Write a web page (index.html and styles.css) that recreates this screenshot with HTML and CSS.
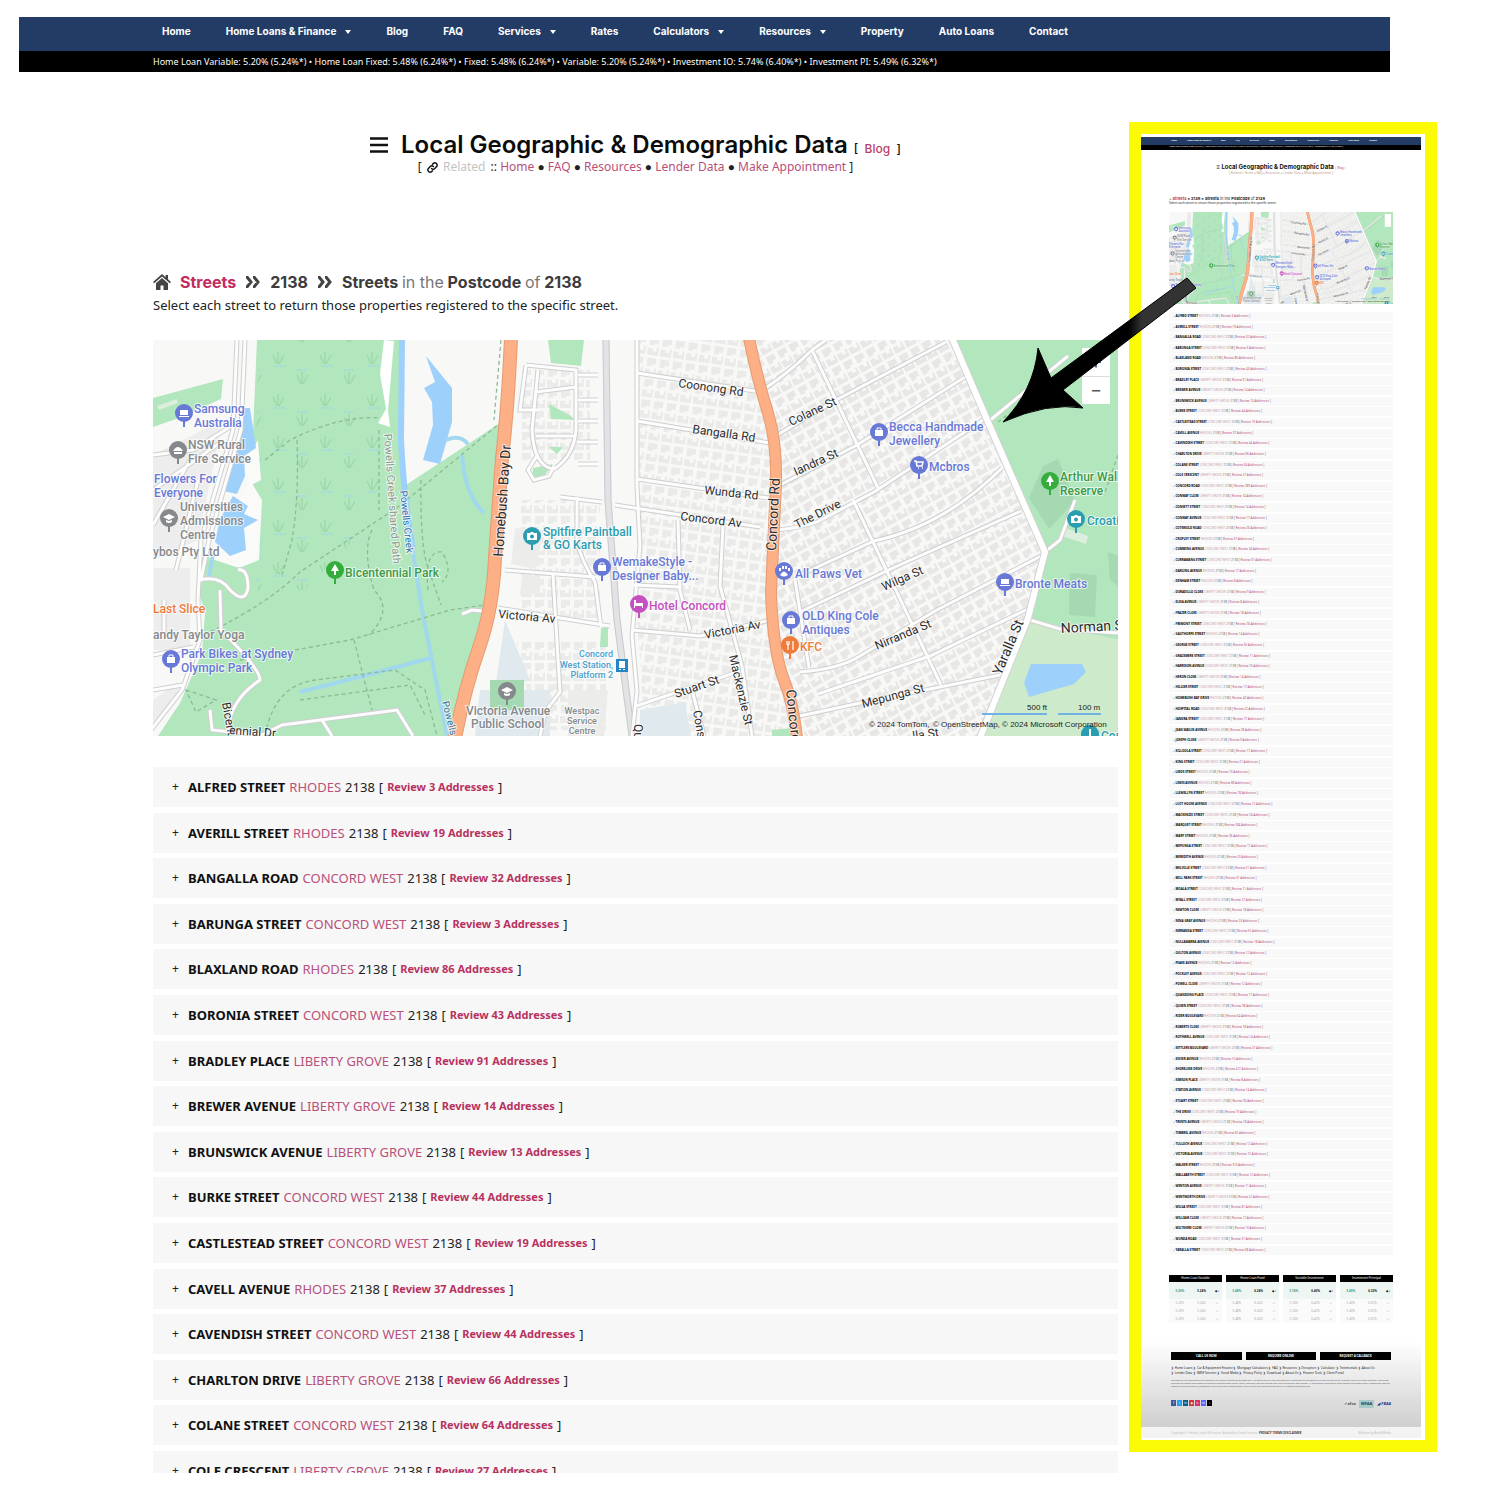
FILE: index.html
```html
<!DOCTYPE html>
<html lang="en">
<head>
<meta charset="utf-8">
<meta name="viewport" content="width=device-width, initial-scale=1">
<title>Local Geographic &amp; Demographic Data</title>
<link rel="stylesheet" href="styles.css">
</head>
<body>
<header class="site-header">
  <nav class="menu" aria-label="Main">
    <a href="#">Home</a>
    <button type="button">Home Loans &amp; Finance<span class="caret"></span></button>
    <a href="#">Blog</a>
    <a href="#">FAQ</a>
    <button type="button">Services<span class="caret"></span></button>
    <a href="#">Rates</a>
    <button type="button">Calculators<span class="caret"></span></button>
    <button type="button">Resources<span class="caret"></span></button>
    <a href="#">Property</a>
    <a href="#">Auto Loans</a>
    <a href="#">Contact</a>
  </nav>
  <p class="ticker">Home Loan Variable: 5.20% (5.24%*) • Home Loan Fixed: 5.48% (6.24%*) • Fixed: 5.48% (6.24%*) • Variable: 5.20% (5.24%*) • Investment IO: 5.74% (6.40%*) • Investment PI: 5.49% (6.32%*)</p>
</header>

<div class="layout">
  <main class="content">
    <div class="title-block">
      <h1><svg class="bars" viewBox="0 0 18 16" aria-hidden="true"><path d="M0 1.500h18M0 8h18M0 14.500h18" stroke="#111" stroke-width="2.600"/></svg>Local Geographic &amp; Demographic Data <small>[ &nbsp;<a href="#">Blog</a>&nbsp; ]</small></h1>
      <p class="related">[ <svg class="chain" viewBox="0 0 24 24" aria-hidden="true"><g fill="none" stroke="#111" stroke-width="3.200" stroke-linecap="round"><path d="M10 14a5 5 0 0 0 7 0l4-4a5 5 0 0 0-7-7l-2 2"/><path d="M14 10a5 5 0 0 0-7 0l-4 4a5 5 0 0 0 7 7l2-2"/></g></svg> <span class="faint">Related</span> :: <a href="#">Home</a> ● <a href="#">FAQ</a> ● <a href="#">Resources</a> ● <a href="#">Lender Data</a> ● <a href="#">Make Appointment</a> ]</p>
    </div>

    <h2 class="crumbs">
      <svg class="house" viewBox="0 0 18 16" aria-hidden="true"><path fill="#444" d="M9 0 0 8l1.200 1.300L9 2.500l7.800 6.800L18 8l-3-2.700V1h-2.400v2.200zM9 4 3 9.200V16h4.500v-4.500h3V16H15V9.200z"/></svg>
      <a href="#">Streets</a>
      <svg class="chevrons" viewBox="0 0 16 12" aria-hidden="true"><path fill="none" stroke="#444" stroke-width="3" d="M1 1h1l4 5-4 5H1M8 1h1l4 5-4 5H8"/></svg>
      <span>2138</span>
      <svg class="chevrons" viewBox="0 0 16 12" aria-hidden="true"><path fill="none" stroke="#444" stroke-width="3" d="M1 1h1l4 5-4 5H1M8 1h1l4 5-4 5H8"/></svg>
      <span>Streets <i>in the</i> Postcode <i>of</i> 2138</span>
    </h2>
    <p class="intro">Select each street to return those properties registered to the specific street.</p>

    <div class="map">
      <svg class="map-art" id="map" viewBox="153 340 965 396" preserveAspectRatio="xMidYMid slice" role="img" aria-label="Map of postcode 2138">
        <defs>
          <g id="pin"><path d="M-1 6h2v8h-2z"/><circle r="9"/></g>
          <g id="bag" fill="#fff"><path d="M-4-2h8v6h-8z"/><path d="M-2-2v-2h4v2" fill="none" stroke="#fff"/></g>
          <g id="laptop"><path d="M-4-3h8v5h-8zM-5 3h10v1H-5z" fill="#fff"/></g>
          <g id="tree"><path d="M0-6-4 1h3v4h2V1h3z" fill="#fff"/></g>
          <g id="cap"><path d="M-6-1 0-4l6 3-6 3zM-3 2v2q3 2 6 0V2L0 3z" fill="#fff"/></g>
          <g id="camera"><path d="M-5-3h3l1-1h2l1 1h3v7H-5z" fill="#fff"/><circle r="2" cy="0.500" fill="#2a9db0"/></g>
          <pattern id="reeds" width="47" height="42" patternUnits="userSpaceOnUse" x="268" y="346">
            <path d="M9 18 5 9M10 18V6M11 18l5-9M33 38l-4-9M34 38V26M35 38l5-9" stroke="#9fd9aa" stroke-width="1.500" fill="none"/>
            <path d="M6 20h12M29 24h10" stroke="#a0d6e8" stroke-width="1.200"/>
          </pattern>
          <pattern id="lots" width="13" height="21" patternUnits="userSpaceOnUse">
            <path d="M1 2h5v3h4V1h2v8H1zM2 12h9v6H7v2H2z" fill="#ebebea"/>
          </pattern>
          <pattern id="lots-tilt" width="13" height="21" patternUnits="userSpaceOnUse" patternTransform="rotate(-29)">
            <path d="M1 2h5v3h4V1h2v8H1zM2 12h9v6H7v2H2z" fill="#e8e7e5"/>
          </pattern>
          <pattern id="lots-east" width="13" height="21" patternUnits="userSpaceOnUse" patternTransform="rotate(8)">
            <path d="M1 2h5v3h4V1h2v8H1zM2 12h9v6H7v2H2z" fill="#eaeae8"/>
          </pattern>
          <g id="roads">
            <path d="M637 340v146l3 60-8 90 5 55-5 45M637 373l124 19M637 421l133 22M637 479l138 20M560 497l42 5M615 505l145 22M505 570l90 7M498 608l112 18M632 630l68 6 71-16M577 497v45q5 20 18 40l6 45M553 575l7 117-15 20-5 24M678 520l2 70 10 40M723 526l-3 60 22 80 10 70M636 706l104-35M692 690l12 46M634 585l46 2"/>
            <path d="M526 365l50 5v60q-2 26-22 39-20-2-22-39l6-60M526 365l-6 45 17 0M536 392l40-5M536 436h40M578 375h20M578 400h20M578 421h20M578 442h20M578 464h20M554 466l-5 10-15 4-6-10 10-16"/>
            <path d="M760 392q30-20 52-42l14-10M772 438l66-39 108-57M780 485l77-40 108-68M777 530q22-2 40-8l57-30 112-74M800 575l74-34q70-15 128-73M800 612l95-45 126-56M800 672q40-3 60-16l75-45 108-56M818 694l112-38 100-48M795 717l70-15 140-28M812 350l66 138M853 500l88 185M795 580l14 88"/>
            <path d="M237 340l-4 90-32 110-3 60 2 40-18 50-31 40M245 340l-4 90-32 110-8 40M153 455l40-5 40-25M153 490l68-48M153 525l40-70M176 570l22-90M164 600v34M200 580q20-5 30 10 15 15 18-2 0-20-10-18M220 590l1 40q40 40 39 50-30 20-32 50M153 655l40-8M153 690l30-5M210 710l2 20 50 5 20-10 115-15 16 26M322 720l10 16"/>
            <path d="M988 422l80-66M1045 552l15-12 15-40M462 614l10-4 20 2M1030 620l30 9 58 4"/>
          </g>
        </defs>

        <path fill="#f8f8f7" d="M153 340h965v396H153z"/>
        <!-- blocks of houses -->
        <path fill="url(#lots-east)" d="M620 340h130l24 90v100l-4 90 12 60 8 56H645l-8-120V340z"/>
        <path fill="url(#lots-tilt)" d="M756 340h197l92 212-18 65-45 119H803l-27-90v-180z"/>
        <path fill="url(#lots)" d="M522 370h68v90h-68zM520 500h80v120h-80zM516 640h90v90h-70z"/>
        <path fill="#eeeded" d="M153 455l70-35-25 120-45 20zM154 568h36v82h-36zM153 700l25-18v15l-25 25z"/>
        <path fill="#e0eaee" d="M505 620l25 60-35 10zM480 690h70v46h-75zM640 710l45-8 6 34h-51z"/>
        <path fill="#ececeb" d="M515 528l28 3-7 38-25-5zM568 690h40l-4 46h-36zM522 576h18v18h-20z"/>

        <!-- parks -->
        <path fill="#b2e6bd" d="M257 340h147l-1 147 97-64-2 60-6 90-8 40-16 60-15 63H158l22-33 22-50 3-40-6-20 10-40 44-18-1-80z"/>
        <path fill="url(#reeds)" d="M259 340h125v130l-20 60-60 60h-48V440z"/>
        <path fill="#b2e6bd" d="M153 398l70-19-2 20-45 20-23 8zM548 340h36l-3 26-30-3zM549 404l22 12 4 4-24-1zM549 447h14l-6 7zM533 468l20-4-12 16-9-1zM601 628h7v19h-8zM772 730l20-2v8h-20z"/>
        <path fill="#b2e6bd" d="M953 340h165v300l-88-20 15-68-57-137z"/>
        <path fill="#cdebca" d="M1028 618l90 22v96H979z"/>
        <path fill="#a5d9b2" d="M1043 466l15-7 17 42-26 28-20-31zM1070 573l27 2-2 42-26-2zM1108 552l10 4v30l-8-6zM490 680h34v30h-34z"/>
        <path fill="#dceedd" d="M1066 528l22 8-2 8-24-8zM157 406l20-7 1 4-19 7z"/>

        <!-- water -->
        <path fill="#fafbf8" d="M250 480l12 20-3 60-20 8-30-10zM258 440l3 40-12 6-6-20z"/>
        <path fill="#9dd0fb" d="M426 356l13 16 13 16v34l-12 42-17-4 10-35-1-23-8-14 11-6zM241 408h9l6 40-12 8 1 20-8 18-14-3 15-44zM233 496l15 10-4 8 14 6-14 8 2 22-16 6-15-14 5-23zM1031 664h51l4 8-12 12-45 13-5-14z"/>
        <path fill="none" stroke="#9dd0fb" stroke-width="6" d="M402 340l-1 100q3 60 12 110"/>
        <path fill="none" stroke="#a2d8ee" stroke-width="4" d="M411 540l11 70 25 126M300 692q80-20 130-34M462 455q3 40 22 58M213 554l-4 24M446 440q14-6 22 4"/>
        <path fill="#fff" d="M384 340l10 1-6 70 2 16-12-4 8-14-6-35z"/>

        <!-- footpaths -->
        <g fill="none" stroke="#8cba94" stroke-width="1.300" stroke-dasharray="4 3">
          <path d="M210 632q60-30 90-60l98-65 102-84M297 440q2 60-5 100l-10 35M265 460l25-20q50-25 90-22M379 430v80M421 480q-1 60 6 85l14 40M372 530q-10 20 2 60 20 20-5 45M240 660l110-20 100-30 35-5M354 640l18 70M265 735q10-50 50-55l80-10 30 20 12 46M300 700l110-15 15 30M186 690l30 10-20 12zM1100 342l-48 40-54 40M428 590q-4-40 14-38 12 20 0 30M501 340l-7 80M498 440l-8 110M1118 455l-14 40"/>
        </g>
        <!-- railway -->
        <path fill="none" stroke="#e2e3e5" stroke-width="7" d="M606 340l2 160 9 120 15 116"/>
        <path fill="none" stroke="#c9cbcf" d="M609 340l2 160 9 120 15 116M603 340l2 160 9 120 15 116"/>

        <!-- streets: casing, then the carriageway -->
        <use href="#roads" fill="none" stroke="#cfcfd1" stroke-width="5"/>
        <use href="#roads" fill="none" stroke="#fdfdfd" stroke-width="3"/>
        <path fill="none" stroke="#d2d2d2" stroke-width="8" d="M952 338l36 84 57 130-17 66-48 120"/>
        <path fill="none" stroke="#fff" stroke-width="6" d="M952 338l36 84 57 130-17 66-48 120"/>

        <!-- main roads -->
        <g fill="none">
          <path stroke="#e59a72" stroke-width="14" d="M511 338q-3 70-9 120l-7 100q-2 50-16 90-14 40-24 90"/>
          <path stroke="#fdaf86" stroke-width="12" d="M511 338q-3 70-9 120l-7 100q-2 50-16 90-14 40-24 90"/>
          <path stroke="#e59a72" stroke-width="12" d="M749 338q8 40 19 75 9 30 8 70l-5 110q2 60 14 90 8 20 12 55"/>
          <path stroke="#fdaf86" stroke-width="10" d="M749 338q8 40 19 75 9 30 8 70l-5 110q2 60 14 90 8 20 12 55"/>
        </g>

        <!-- street names -->
        <g class="road-name">
          <text transform="translate(678 387) rotate(8)">Coonong Rd</text>
          <text transform="translate(692 433) rotate(8)">Bangalla Rd</text>
          <text transform="translate(704 494) rotate(6)">Wunda Rd</text>
          <text transform="translate(680 520) rotate(7)">Concord Av</text>
          <text transform="translate(498 618) rotate(5)">Victoria Av</text>
          <text transform="translate(705 639) rotate(-11)">Victoria Av</text>
          <text transform="translate(676 698) rotate(-19)">Stuart St</text>
          <text transform="translate(729 656) rotate(77)">Mackenzie St</text>
          <text transform="translate(693 711) rotate(80)">Conso</text>
          <text transform="translate(634 724) rotate(90)">Queen</text>
          <text transform="translate(791 426) rotate(-25)">Colane St</text>
          <text transform="translate(796 476) rotate(-25)">Iandra St</text>
          <text transform="translate(797 529) rotate(-27)">The Drive</text>
          <text transform="translate(884 591) rotate(-24)">Wilga St</text>
          <text transform="translate(877 650) rotate(-23)">Nirranda St</text>
          <text transform="translate(863 708) rotate(-15)">Mepunga St</text>
          <text transform="translate(913 740) rotate(-8)">lla St</text>
          <text transform="translate(222 703) rotate(80)">Bicent</text>
          <text transform="translate(229 734) rotate(4)">ennial Dr</text>
        </g>
        <g class="road-name large">
          <text transform="translate(503 557) rotate(-86)">Homebush Bay Dr</text>
          <text transform="translate(776 551) rotate(-87)">Concord Rd</text>
          <text transform="translate(786 690) rotate(84)">Concord</text>
          <text transform="translate(1001 676) rotate(-67)">Yaralla St</text>
          <text transform="translate(1061 633) rotate(-3)">Norman St</text>
        </g>
        <text class="water-name" transform="translate(400 491) rotate(84)">Powells Creek</text>
        <text class="water-name" transform="translate(442 702) rotate(76)">Powells C</text>
        <text class="path-name" transform="translate(384 434) rotate(86)">Powells Creek shared Path</text>

        <!-- places -->
        <g class="place" fill="#6878d6">
          <use href="#pin" x="184" y="413"/><use href="#laptop" x="184" y="413"/>
          <text x="194" y="413">Samsung</text><text x="194" y="427">Australia</text>
          <text x="154" y="483">Flowers For</text><text x="154" y="497">Everyone</text>
          <use href="#pin" x="171" y="659"/><use href="#bag" x="171" y="659"/>
          <text x="181" y="658">Park Bikes at Sydney</text><text x="181" y="672">Olympic Park</text>
          <use href="#pin" x="602" y="567"/><use href="#bag" x="602" y="567"/>
          <text x="612" y="566">WemakeStyle -</text><text x="612" y="580">Designer Baby...</text>
          <use href="#pin" x="879" y="432"/><use href="#bag" x="879" y="432"/>
          <text x="889" y="431">Becca Handmade</text><text x="889" y="445">Jewellery</text>
          <use href="#pin" x="919" y="465"/><path d="M914 461h2l1 5h5l1-4h-6M918 468h1M922 468h1" stroke="#fff" stroke-width="1.500" fill="none"/>
          <text x="929" y="471">Mcbros</text>
          <use href="#pin" x="784" y="571"/><path fill="#fff" d="M780 575q4-7 8 0-4 3-8 0zM779 568h2v3h-2zM782 566h2v3h-2zM785 566h2v3h-2zM788 568h2v3h-2z"/>
          <text x="795" y="578">All Paws Vet</text>
          <use href="#pin" x="791" y="620"/><use href="#bag" x="791" y="620"/>
          <text x="802" y="620">OLD King Cole</text><text x="802" y="634">Antiques</text>
          <use href="#pin" x="1005" y="582"/><use href="#laptop" x="1005" y="582"/>
          <text x="1015" y="588">Bronte Meats</text>
        </g>
        <g class="place" fill="#85898c">
          <use href="#pin" x="178" y="450"/><path fill="#fff" d="M173 451q5-8 10 0zM174 452h8v2h-8z"/>
          <text x="188" y="449">NSW Rural</text><text x="188" y="463">Fire Service</text>
          <use href="#pin" x="169" y="518"/><use href="#cap" x="169" y="518"/>
          <text x="180" y="511">Universities</text><text x="180" y="525">Admissions</text><text x="180" y="539">Centre</text>
          <text x="153" y="556">ybos Pty Ltd</text>
          <text x="153" y="639">andy Taylor Yoga</text>
          <use href="#pin" x="507" y="691"/><use href="#cap" x="507" y="691"/>
          <text x="466" y="715">Victoria Avenue</text><text x="471" y="728">Public School</text>
        </g>
        <g class="place note" fill="#85898c" text-anchor="middle">
          <text x="582" y="714">Westpac</text><text x="582" y="724">Service</text><text x="582" y="734">Centre</text>
        </g>
        <g class="place note" fill="#4b9fd0" text-anchor="end">
          <text x="613" y="657">Concord</text><text x="613" y="668">West Station,</text><text x="613" y="678">Platform 2</text>
        </g>
        <path fill="#2484c6" d="M616 659h12v13h-12z"/><path fill="#fff" d="M619 661h6v7h-6zM619 669h2v1h-2zM623 669h2v1h-2z"/>
        <g class="place" fill="#3b9a47">
          <use href="#pin" x="335" y="570" fill="#35ad3b"/><use href="#tree" x="335" y="570"/><text x="345" y="577">Bicentennial Park</text>
          <use href="#pin" x="1050" y="481" fill="#35ad3b"/><use href="#tree" x="1050" y="481"/><text x="1060" y="481">Arthur Walker</text><text x="1060" y="495">Reserve</text>
        </g>
        <g class="place" fill="#2a9db0">
          <use href="#pin" x="532" y="536"/><use href="#camera" x="532" y="536"/><text x="543" y="536">Spitfire Paintball</text><text x="543" y="549">&amp; GO Karts</text>
          <use href="#pin" x="1076" y="519"/><use href="#camera" x="1076" y="519"/><text x="1087" y="525">Croatian</text>
          <use href="#pin" x="1090" y="734"/><path fill="#fff" d="M1089 729h2v7h-2z"/><text x="1101" y="740">Con</text>
        </g>
        <g class="place" fill="#c550bf"><use href="#pin" x="639" y="604"/><path fill="#fff" d="M634 600h2v3h7v5h-1v-2h-7v2h-1z"/><text x="649" y="610">Hotel Concord</text></g>
        <g class="place" fill="#ee7b3a"><use href="#pin" x="790" y="645"/><path d="M787 641v3q2 2 2 0v-3M788 644v6M793 641v9" stroke="#fff" fill="none" stroke-width="1.200"/><text x="800" y="651">KFC</text><text x="153" y="613">Last Slice</text></g>

        <!-- scale and credits -->
        <path stroke="#72b1e4" stroke-width="2" d="M982 714h65M1058 714h43"/>
        <g class="credit"><text x="1027" y="710">500 ft</text><text x="1078" y="710">100 m</text><text x="869" y="727">© 2024 TomTom,</text><text x="933" y="727">© OpenStreetMap, © 2024 Microsoft Corporation</text></g>
      </svg>
      <div class="zoom">
        <button type="button" aria-label="Zoom in">+</button>
        <button type="button" aria-label="Zoom out">−</button>
      </div>
    </div>

    <div class="street-window"><ul class="streets" id="street-list"></ul></div>
  </main>

  <aside class="preview" aria-label="Full page preview">
    <div class="mini">
      <div class="mini-nav"><span>Home</span><span>Home Loans &amp; Finance ▾</span><span>Blog</span><span>FAQ</span><span>Services ▾</span><span>Rates</span><span>Calculators ▾</span><span>Resources ▾</span><span>Property</span><span>Auto Loans</span><span>Contact</span></div>
      <p class="mini-ticker">Home Loan Variable: 5.20% (5.24%*) • Home Loan Fixed: 5.48% (6.24%*) • Fixed: 5.48% (6.24%*) • Variable: 5.20% (5.24%*) • Investment IO: 5.74% (6.40%*) • Investment PI: 5.49% (6.32%*)</p>
      <div class="mini-title">
        <h3>≡ Local Geographic &amp; Demographic Data <small>[ Blog ]</small></h3>
        <p>[ Related :: Home ● FAQ ● Resources ● Lender Data ● Make Appointment ]</p>
      </div>
      <div class="mini-body">
        <h4>⌂ <a href="#">Streets</a> » 2138 » Streets <i>in the</i> Postcode <i>of</i> 2138</h4>
        <p class="mini-intro">Select each street to return those properties registered to the specific street.</p>
        <svg class="mini-map" viewBox="153 340 965 396" preserveAspectRatio="xMidYMid slice" aria-hidden="true"><use href="#map" x="153" y="340" width="965" height="396"/><path fill="#fff" d="M1082 348h27v56h-27z"/></svg>
        <ul class="mini-streets" id="mini-list"></ul>
        <div class="rates" id="rates"></div>
      </div>
      <div class="mini-footer">
        <div class="mini-actions"><button type="button">CALL US NOW</button><button type="button">ENQUIRE ONLINE</button><button type="button">REQUEST A CALLBACK</button></div>
        <p class="mini-links">❯ Home Loans ❯ Car &amp; Equipment Finance ❯ Mortgage Calculators ❯ FAQ ❯ Resources ❯ Disruptors ❯ Calculator ❯ Testimonials ❯ About Us<br>❯ Lender Data ❯ SMSF Services ❯ Social Media ❯ Privacy Policy ❯ Download ❯ About Us ❯ Finance Tools ❯ Client Portal</p>
        <p class="mini-legal">The material and information on this website is for general information purposes only. You should not rely upon the material or information on the website as a basis for making any business, legal or any other decisions. The finance products and interest rates shown are subject to change without notice. Terms, conditions, fees and charges apply and are available upon request. All applications are subject to credit approval and lender criteria. Comparison rates are based on a secured loan of $150,000 over a term of 25 years. Different terms, fees or other loan amounts might result in a different comparison rate.</p>
        <div class="mini-brands">
          <span class="social"><i class="fb">f</i><i class="tw">t</i><i class="li">in</i><i class="yt">▶</i><i class="ig">o</i><i class="ma">m</i><i class="tk">♪</i></span>
          <span class="badges"><b>✓afca</b><b class="boxed">MFAA</b><b class="fbaa">◢ FBAA</b></span>
        </div>
      </div>
      <div class="mini-base"><span>Copyright © Home Loans &amp; Finance. Australian Credit Licence. <b>PRIVACY TERMS DISCLAIMER</b></span><span>Website by BeliefMedia</span></div>
    </div>
    <svg class="arrow" viewBox="0 0 196 148" aria-hidden="true">
      <defs><linearGradient id="shaft"><stop offset="0.650"/><stop offset="0.720" stop-color="#333"/><stop offset="1" stop-color="#333"/></linearGradient></defs>
      <path fill="url(#shaft)" stroke="#000" stroke-width="1" d="M3 147Q34 115 38 73L51 103 187 3l9 10L63 115l20 18Q48 127 3 147z"/>
    </svg>
  </aside>
</div>
<script src="streets.js"></script>
</body>
</html>
```
FILE: styles.css
```css
* { box-sizing: border-box; }

body {
  margin: 0;
  padding: 17px 63px 0 19px;
  background: #fff;
  color: #222;
  font: 14px/20px "Noto Sans", "Open Sans", sans-serif;
}

h1, h2, h3, h4, p, ul { margin: 0; padding: 0; }
ul { list-style: none; }
a { color: #b8406a; text-decoration: none; }
button { border: 0; padding: 0; font: inherit; color: inherit; background: none; }

/* header */
.site-header { margin-right: 47px; color: #fff; background: #000; }
.menu {
  display: flex;
  gap: 35px;
  height: 34px;
  padding: 4px 0 0 143px;
  background: #233c66;
  font: 700 10px/20px Inter, "Open Sans", sans-serif;
  white-space: nowrap;
}
.menu a { color: #fff; }
.menu a, .menu button { height: 20px; }
.caret {
  display: inline-block;
  margin: 0 0 1px 9px;
  border: 3px solid transparent;
  border-top: 4px solid #fff;
  border-bottom: 0;
}
.ticker {
  padding-left: 134px;
  font-size: 9px;
  line-height: 21px;
  white-space: nowrap;
}

/* two columns */
.layout {
  display: grid;
  grid-template-columns: minmax(0, 1fr) 308px;
  gap: 11px;
  align-items: start;
  padding-left: 134px;
}
.content { padding-top: 58px; }

.title-block { text-align: center; white-space: nowrap; }
h1 { height: 29px; font: 600 24px/30px Inter, sans-serif; color: #0c0c0c; }
h1 small { font-size: 12px; font-weight: 500; }
.bars { width: 18px; height: 16px; margin-right: 13px; }
.related { height: 16px; font-size: 12px; line-height: 16px; }
.related a { color: #b8507a; }
.chain { width: 11px; height: 11px; margin: 0 2px; vertical-align: middle; }
.faint { margin-right: 2px; color: #c4c4c4; }

.crumbs {
  display: flex;
  align-items: center;
  gap: 9px;
  margin-top: 95px;
  font: 700 16px/24px Inter, sans-serif;
  color: #3c3c3c;
}
.crumbs a { color: #c22c5e; }
.crumbs i { font-style: normal; font-weight: 400; color: #777; }
.house { width: 18px; height: 16px; }
.chevrons { width: 16px; height: 12px; }
.intro { font-size: 13px; line-height: 22px; }

/* map */
.map { position: relative; margin-top: 24px; }
.map-art { display: block; width: 100%; height: 396px; }
.zoom {
  position: absolute;
  top: 8px;
  right: 8px;
  display: grid;
  width: 28px;
}
.zoom button { height: 28px; background: #fff; font: 20px/28px Roboto, sans-serif; color: #555; }
.zoom button + button { border-top: 1px solid #ddd; }

.place text, .road-name text, .water-name, .path-name { paint-order: stroke; stroke: #fff; stroke-opacity: 0.700; stroke-width: 2px; }
.place { font: 500 12px Roboto, sans-serif; }
.note { font-size: 9px; }
.road-name { font: 12px Roboto, sans-serif; fill: #2c2c2c; }
.large { font-size: 14px; }
.water-name { font: 10px Roboto, sans-serif; fill: #2e6fa8; }
.path-name { font: 11px Roboto, sans-serif; fill: #8c9a90; }
.credit { font: 8px "Liberation Sans", sans-serif; fill: #222; }

/* street rows */
.street-window { height: 706px; margin-top: 31px; overflow: hidden; }
.streets { display: grid; align-content: space-between; height: 724px; }
.streets li {
  display: flex;
  align-items: center;
  gap: 4px;
  height: 40px;
  padding-left: 19px;
  background: #f7f7f7;
  white-space: nowrap;
  font-size: 13px;
}
.streets strong { font-size: 13px; color: #111; }
.streets .plus { width: 12px; font-size: 12px; }
.streets .suburb { color: #b8507a; }
.streets .review { font-size: 11px; font-weight: 700; color: #b8325f; }

/* full page preview */
.preview {
  position: relative;
  margin-top: 50px;
  padding: 3px 4px 2px 0;
  border: 12px solid #fbfb05;
}
.mini { font: 3px/4px "Noto Sans", sans-serif; white-space: nowrap; }
.mini-nav {
  display: flex;
  gap: 10px;
  height: 8px;
  padding: 2px 0 0 30px;
  background: #233c66;
  color: #fff;
  font-weight: 700;
}
.mini-nav span { font-size: 2px; }
.mini-ticker { height: 5px; padding-left: 28px; background: #000; color: #fff; font-size: 2px; }
.mini-title { padding-top: 14px; text-align: center; }
.mini-title h3 { font: 700 6px/6px Inter, sans-serif; color: #111; }
.mini-title small { font-size: 3px; font-weight: 400; color: #b8507a; }
.mini-title p { color: #b98; }
.mini-body { padding: 21px 28px 0; }
.mini-body h4 { font: 700 4px/5px Inter, sans-serif; }
.mini-body h4 i { font-style: normal; font-weight: 400; }
.mini-intro { margin-bottom: 7px; }
.mini-map { display: block; width: 100%; height: 92px; }
.mini-streets { display: grid; align-content: space-between; height: 943px; margin-top: 8px; }
.mini-streets li { height: 9px; padding-left: 4px; line-height: 9px; background: #f9f9f9; color: #777; }
.mini-streets strong { color: #000; }
.mini-streets a { color: #b8507a; }
.mini-streets .suburb { color: #c9a5b0; }

.rates { display: grid; grid-template-columns: repeat(4, 1fr); gap: 4px; margin-top: 20px; }
.rates table { width: 100%; border-collapse: collapse; background: #fafafa; color: #aaa; text-align: center; }
.rates caption { height: 7px; background: #000; color: #fff; line-height: 7px; }
.rates td { height: 8px; padding: 0; }
.rates tr:first-child td { height: 17px; background: #eef6f3; color: #111; font-weight: 700; }
.rates tr:first-child td:first-child { color: #3a9c83; }

.mini-footer { margin-top: 18px; padding: 11px 30px 19px; background: linear-gradient(#fff, #cfcfcf); }
.mini-actions { display: grid; grid-template-columns: repeat(3, 1fr); gap: 4px; }
.mini-actions button { height: 8px; background: #000; color: #fff; font-weight: 700; font-size: 3px; }
.mini-links { margin-top: 6px; line-height: 5px; font-size: 3px; color: #222; }
.mini-legal { height: 12px; margin-top: 3px; white-space: normal; font-size: 2px; line-height: 3px; color: #555; }
.mini-brands { display: flex; justify-content: space-between; margin-top: 9px; }
.social { display: flex; gap: 1px; }
.social i { width: 5px; height: 6px; color: #fff; font-style: normal; text-align: center; line-height: 6px; }
.fb { background: #3b5998; }
.tw { background: #1da1f2; }
.li { background: #0a5f8a; }
.yt { background: #cd3a35; }
.ig { background: #d6336c; }
.ma { background: #6364ff; }
.tk { background: #000; }
.badges { display: flex; gap: 3px; line-height: 8px; font-size: 4px; color: #555; }
.boxed { padding: 0 2px; background: #a9ccc8; color: #245; }
.fbaa { color: #1f2f86; font-style: italic; }
.mini-base { display: flex; justify-content: space-between; padding: 4px 30px 3px; background: #f3f3f3; color: #bbb; }
.mini-base b { color: #444; }

.arrow { position: absolute; top: 141px; left: -141px; width: 196px; height: 148px; }
```
FILE: streets.js
```js
// Each entry: street | suburb code | number of addresses
const SUBURBS = { R: "RHODES", C: "CONCORD WEST", L: "LIBERTY GROVE" };
const STREETS = `ALFRED STREET|R|3
AVERILL STREET|R|19
BANGALLA ROAD|C|32
BARUNGA STREET|C|3
BLAXLAND ROAD|R|86
BORONIA STREET|C|43
BRADLEY PLACE|L|91
BREWER AVENUE|L|14
BRUNSWICK AVENUE|L|13
BURKE STREET|C|44
CASTLESTEAD STREET|C|19
CAVELL AVENUE|R|37
CAVENDISH STREET|C|44
CHARLTON DRIVE|L|66
COLANE STREET|C|64
COLE CRESCENT|L|27
CONCORD ROAD|C|289
CONWAY CLOSE|L|14
CONSETT STREET|C|14
CONWAY AVENUE|C|17
COTSWOLD ROAD|C|26
CROPLEY STREET|R|37
CUMMING AVENUE|C|34
CURRAWANG STREET|C|31
DARLING AVENUE|R|17
DENHAM STREET|R|8
DORADILLO CLOSE|L|9
ELISA AVENUE|L|8
FRAZER CLOSE|L|18
FREMONT STREET|C|26
GAUTHORPE STREET|R|14
GEORGE STREET|C|30
GRACEMERE STREET|C|11
HARRISON AVENUE|C|16
HERON CLOSE|L|14
HILLIER STREET|C|17
HOMEBUSH BAY DRIVE|R|40
HOSPITAL ROAD|C|22
IANDRA STREET|C|77
JEAN WAILES AVENUE|R|28
JOSEPH CLOSE|L|9
KILLOOLA STREET|C|17
KING STREET|C|21
LEEDS STREET|R|10
LEWIS AVENUE|R|38
LLEWELLYN STREET|R|78
LUCY HOUSE AVENUE|C|12
MACKENZIE STREET|C|74
MARQUET STREET|R|334
MARY STREET|R|36
MEPUNGA STREET|C|17
MEREDITH AVENUE|R|20
MELVILLE STREET|C|21
MILL PARK STREET|R|31
MOALA STREET|C|11
MYALL STREET|C|27
NEWTON CLOSE|L|18
NINA GRAY AVENUE|R|23
NIRRANDA STREET|C|55
NULLAWARRA AVENUE|C|18
OULTON AVENUE|C|12
PEAKE AVENUE|R|12
POCKLEY AVENUE|C|12
POWELL CLOSE|L|12
QUANDONG PLACE|C|17
QUEEN STREET|C|98
RIDER BOULEVARD|R|64
ROBERTS CLOSE|L|18
ROTHWELL AVENUE|C|14
SETTLERS BOULEVARD|L|27
SEVIER AVENUE|R|10
SHORELINE DRIVE|R|417
SIMEON PLACE|L|8
STATION AVENUE|C|14
STUART STREET|C|90
THE DRIVE|C|79
TRENTS AVENUE|L|18
TIMBREL AVENUE|R|65
TULLOCH AVENUE|C|12
VICTORIA AVENUE|C|72
WALKER STREET|R|313
WALLABETH STREET|C|12
WENTON AVENUE|L|11
WENTWORTH DRIVE|L|22
WILGA STREET|C|81
WILLIAM CLOSE|L|12
WILTSHIRE CLOSE|L|13
WUNDA ROAD|C|31
YARALLA STREET|C|38`.split("\n").map(line => line.split("|"));

const row = ([name, code, count]) =>
  `<li><span class="plus">+</span> <strong>${name}</strong> <span class="suburb">${SUBURBS[code]}</span> <span>2138</span> <span>[</span> <a class="review" href="#">Review ${count} Addresses</a> <span>]</span></li>`;

document.getElementById("street-list").innerHTML = STREETS.slice(0, 16).map(row).join("");
document.getElementById("mini-list").innerHTML = STREETS.map(row).join("");

const CARDS = [
  ["Home Loan Variable", "5.20%", "5.24%"],
  ["Home Loan Fixed", "5.48%", "6.24%"],
  ["Variable Investment", "5.74%", "6.40%"],
  ["Investment Principal", "5.49%", "6.32%"]
];
document.getElementById("rates").innerHTML = CARDS.map(([title, rate, comparison]) =>
  `<table><caption>${title}</caption>` +
  `<tr><td>${rate}</td><td>${comparison}</td><td>◆ ›</td></tr>` +
  `<tr><td>${rate}</td><td>${comparison}</td><td>▪ ›</td></tr>`.repeat(3) +
  `</table>`).join("");
```
